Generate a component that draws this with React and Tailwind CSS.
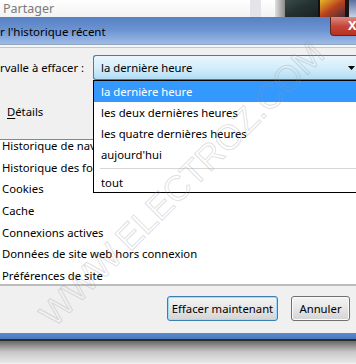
export default function App() {
  const rows = [
    "Historique de navigation et des téléchargements",
    "Historique des formulaires et des recherches",
    "Cookies",
    "Cache",
    "Connexions actives",
    "Données de site web hors connexion",
    "Préférences de site",
  ];
  const items = ["les deux dernières heures", "les quatre dernières heures", "aujourd'hui"];
  return (
    <div className="relative w-[356px] h-[364px] overflow-hidden bg-[#f0f0f0] font-['Noto_Sans',sans-serif] text-[11.3px] text-black">
      {/* top strip */}
      <div className="h-[17px] flex bg-gradient-to-b from-[#ffffff] to-[#f2f2f2]">
        <div className="w-[250px] pl-[3px] pt-[1px] text-[12.5px] leading-[15px] text-[#7a7a7a]">Partager</div>
        <div className="w-[11px] bg-[#e3e5e8]" />
        <div className="w-[14px]" />
        <div className="w-[10px] bg-gradient-to-r from-[#e0e0e0] to-[#8a8a8a]" />
        <div className="w-[33px] bg-gradient-to-br from-[#3a4a4a] via-[#243030] to-[#1a2222]" />
        <div className="w-[2px] bg-[#111]" />
        <div className="w-[25px] bg-gradient-to-br from-[#e6b52a] via-[#b8401c] to-[#4a2a30]" />
        <div className="w-[4px] bg-[#151515]" />
        <div className="flex-1 bg-gradient-to-b from-[#5b6fa0] to-[#c9d4e8]" />
      </div>
      {/* title bar */}
      <div className="relative h-[27px] flex items-center bg-gradient-to-b from-[#5580c4] via-[#6e95d2] to-[#9fbbe6]">
        <span className="leading-[14px] pt-[3px] text-[11.5px]">r l'historique récent</span>
        <div className="ml-auto self-start h-[19px] w-[26px] rounded-bl-[4px] border border-t-0 border-r-0 border-[#5a2621] bg-gradient-to-b from-[#dc8a7f] via-[#c5473a] to-[#b8321f] overflow-hidden">
          <span className="block pl-[17px] text-[13px] font-bold leading-[17px] text-white">X</span>
        </div>
      </div>
      <div className="h-[1px] bg-[#8fa5c4]" />
      <div className="h-[2px] bg-[#f7f7f7]" />
      <div className="h-[1px] bg-[#c2c7ce]" />
      {/* interval row */}
      <div className="mt-[7px] flex items-center h-[25px]">
        <div className="w-[93px] leading-[14px]">rvalle à effacer :</div>
        <div className="flex-1 h-[25px] flex items-center pl-[7px] border border-r-0 border-[#3c7fb1] rounded-l-[3px] bg-gradient-to-b from-[#eaf6fd] via-[#d4eefb] to-[#b2dcf3]">
          <span className="leading-[14px]">la dernière heure</span>
          <svg className="ml-auto mr-[1px]" width="7" height="4" viewBox="0 0 7 4"><path d="M0 0h7L3.5 4z" fill="#000" /></svg>
        </div>
      </div>
      {/* details */}
      <div className="h-[59px] pl-[7px] pt-[25px] leading-[14px]">
        <span className="underline underline-offset-2">D</span>étails
      </div>
      {/* list */}
      <div className="h-[147px] border-t border-b-2 border-t-[#828790] border-b-[#bdbdbd] bg-white overflow-hidden">
        <div className="-mt-[5px]">
          {rows.map((r) => (
            <div key={r} className="h-[21.7px] leading-[21.7px] pl-[2px] whitespace-nowrap">{r}</div>
          ))}
        </div>
      </div>
      {/* buttons */}
      <div className="h-[47px] flex items-start justify-end pt-[10px] pr-[6px] gap-[13px]">
        <button className="w-[111px] h-[25px] rounded-[3px] border border-[#3c7fb1] shadow-[inset_0_0_0_1px_#9fdcf9] bg-gradient-to-b from-[#f4f4f4] via-[#e6e6e6] to-[#d4d4d4] leading-[14px]">Effacer maintenant</button>
        <button className="w-[59px] h-[25px] rounded-[3px] border border-[#707070] shadow-[inset_0_0_0_1px_#fbfbfb] bg-gradient-to-b from-[#f4f4f4] via-[#e6e6e6] to-[#d4d4d4] leading-[14px]">Annuler</button>
      </div>
      {/* bottom frame */}
      <div className="h-[6px] bg-gradient-to-b from-[#5a8ad0] to-[#4a78bd]" />
      <div className="h-[2px] bg-[#2c2c2c]" />
      <div className="h-[22px] bg-gradient-to-b from-[#6a6a6a] via-[#c8c8c8] to-[#e8e8e8]" />

      {/* dropdown */}
      <div className="absolute left-[93px] top-[80px] w-[280px] h-[113px] border border-black bg-white">
        <div className="h-[21px] leading-[21px] pl-[7px] bg-[#3399ff] text-white">la dernière heure</div>
        {items.map((t) => (
          <div key={t} className="h-[21px] leading-[21px] pl-[7px]">{t}</div>
        ))}
        <div className="my-[3px] ml-[6px] h-[1px] bg-[#d7d7d7]" />
        <div className="h-[21px] leading-[21px] pl-[7px]">tout</div>
      </div>

      {/* watermark */}
      <div className="pointer-events-none absolute left-[182px] top-[184px] -translate-x-1/2 -translate-y-1/2 -rotate-45 whitespace-nowrap font-['Liberation_Sans',sans-serif] text-[35px] text-transparent [-webkit-text-stroke:1px_rgba(150,150,150,0.3)]">
        WWW.ELECTROZ.COM
      </div>
    </div>
  );
}
